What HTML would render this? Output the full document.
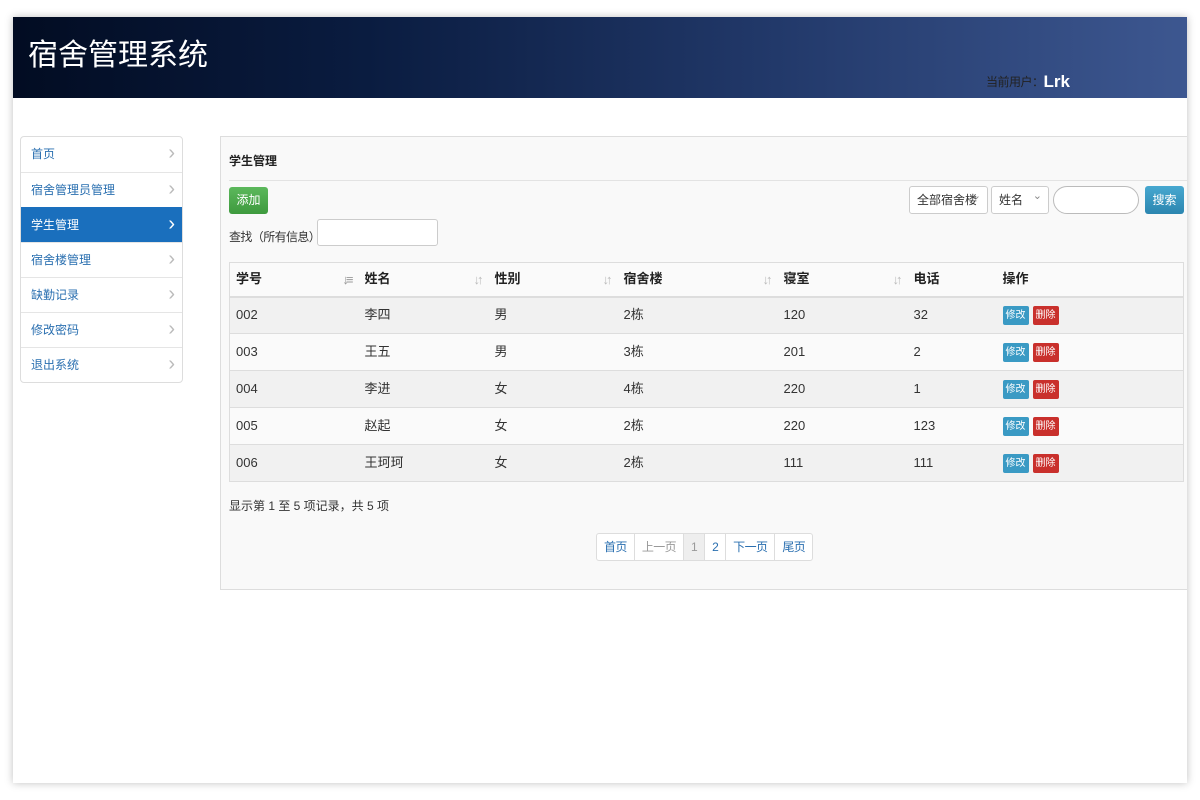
<!DOCTYPE html><html><head><meta charset="utf-8"><style>
*{box-sizing:border-box;margin:0;padding:0}
body{width:1200px;height:800px;background:#fff;font-family:"Liberation Sans","Noto Sans CJK SC",sans-serif;font-size:12px;color:#333;position:relative;overflow:hidden}
.page{position:absolute;left:13px;top:17px;width:1174px;height:766px;background:#fff;box-shadow:0 0 8px rgba(0,0,0,.25);overflow:hidden}
.hdr{position:absolute;left:0;top:0;width:1174px;height:81px;background:linear-gradient(90deg,#020c22 0%,#0a1c40 30%,#22396a 65%,#3d5790 100%)}
.hdr h1{position:absolute;left:15px;top:13px;color:#fff;font-size:30px;line-height:44px;font-weight:normal;font-family:"Noto Sans CJK SC",sans-serif}
.user{position:absolute;left:973px;top:56px;color:#222;font-size:12px;line-height:16px;letter-spacing:-0.5px}
.user b{color:#fff;font-size:17px;margin-left:0;position:relative;top:1px;letter-spacing:0}
.side{position:absolute;left:7px;top:119px;width:163px;border:1px solid #ddd;border-radius:4px;background:#fff;overflow:hidden}
.side div{height:35px;line-height:34px;padding-left:10px;color:#2a6fb0;border-top:1px solid #e5e5e5;position:relative;font-size:12px}
.side div:first-child{border-top:none}
.side div:after{content:"›";position:absolute;right:7px;top:-1px;color:#bbb;font-size:20px}
.side div.on{background:#1a6fbd;color:#fff;border-color:#1a6fbd}
.side div.on:after{color:#fff}
.main{position:absolute;left:207px;top:119px;width:980px;height:454px;background:#f9f9f9;border:1px solid #ddd}
.ttl{position:absolute;left:8px;top:15px;font-size:12px;font-weight:bold;color:#222}
.hr{position:absolute;left:8px;right:4px;top:43px;border-top:1px solid #e3e3e3}
.add{position:absolute;left:8px;top:50px;width:39px;height:27px;background:linear-gradient(#5cb85c,#3e9a3e);border-radius:3px;color:#fff;text-align:center;line-height:27px;font-size:12px}
.find{position:absolute;left:8px;top:91px;letter-spacing:-0.6px}
.inp{position:absolute;left:96px;top:82px;width:121px;height:27px;border:1px solid #ccc;border-radius:3px;background:#fff}
.sel{position:absolute;top:49px;height:28px;border:1px solid #ccc;border-radius:3px;background:#fff;line-height:26px;padding-left:7px;font-size:12px}
.sel:after{content:"⌄";position:absolute;right:6px;top:-4px;color:#888;font-size:11px}
.srch{position:absolute;left:832px;top:49px;width:86px;height:28px;border:1px solid #bbb;border-radius:14px;background:#fff}
.sbtn{position:absolute;left:924px;top:49px;width:39px;height:28px;background:linear-gradient(#47a8d0,#2c86b0);border-radius:3px;color:#fff;text-align:center;line-height:28px}
table{position:absolute;left:8px;top:125px;width:955px;border-collapse:collapse;border:1px solid #ddd;background:#fafafa}
th{height:34px;text-align:left;padding-left:6px;font-size:13px;font-weight:bold;color:#222;border-bottom:2px solid #ddd;position:relative;background:#fafafa;line-height:16px}
th i{position:absolute;right:8px;top:9px;color:#bbb;font-style:normal;font-size:13px;letter-spacing:-3px}
td{height:37px;padding-left:6px;border-top:1px solid #ddd;font-size:13px;color:#333;line-height:16px;vertical-align:middle}
tr.g td{background:#f1f1f1}
.b{display:inline-block;width:26px;height:19px;line-height:19px;text-align:center;color:#fff;font-size:10px;border-radius:2px;margin-right:4px;vertical-align:middle}
.e{background:#3a9ac4}.d{background:#c9302c}
.info{position:absolute;left:8px;top:360px}
.pg{position:absolute;left:375px;top:396px;height:28px;border:1px solid #ddd;border-radius:3px;display:flex;background:#fff}
.pg span{padding:0 7px;line-height:26px;color:#2a6fb0;border-left:1px solid #ddd;font-size:12px;letter-spacing:-0.6px}
.pg span:first-child{border-left:none}
.pg .dis{color:#999}.pg .act{background:#eee;color:#999}
</style></head><body><div class="page">
<div class="hdr"><h1>宿舍管理系统</h1><div class="user">当前用户：<b>Lrk</b></div></div>
<div class="side"><div>首页</div><div>宿舍管理员管理</div><div class="on">学生管理</div><div>宿舍楼管理</div><div>缺勤记录</div><div>修改密码</div><div>退出系统</div></div>
<div class="main">
<div class="ttl">学生管理</div><div class="hr"></div>
<div class="add">添加</div>
<div class="find">查找（所有信息）:</div><div class="inp"></div>
<div class="sel" style="left:688px;width:79px">全部宿舍楼</div>
<div class="sel" style="left:770px;width:58px">姓名</div>
<div class="srch"></div><div class="sbtn">搜索</div>
<table>
<tr><th style="width:129px">学号<i style="color:#999">↓≡</i></th><th style="width:130px">姓名<i>↓↑</i></th><th style="width:129px">性别<i>↓↑</i></th><th style="width:160px">宿舍楼<i>↓↑</i></th><th style="width:130px">寝室<i>↓↑</i></th><th style="width:89px">电话</th><th>操作</th></tr>
<tr class="g"><td>002</td><td>李四</td><td>男</td><td>2栋</td><td>120</td><td>32</td><td><span class="b e">修改</span><span class="b d">删除</span></td></tr>
<tr><td>003</td><td>王五</td><td>男</td><td>3栋</td><td>201</td><td>2</td><td><span class="b e">修改</span><span class="b d">删除</span></td></tr>
<tr class="g"><td>004</td><td>李进</td><td>女</td><td>4栋</td><td>220</td><td>1</td><td><span class="b e">修改</span><span class="b d">删除</span></td></tr>
<tr><td>005</td><td>赵起</td><td>女</td><td>2栋</td><td>220</td><td>123</td><td><span class="b e">修改</span><span class="b d">删除</span></td></tr>
<tr class="g"><td>006</td><td>王珂珂</td><td>女</td><td>2栋</td><td>111</td><td>111</td><td><span class="b e">修改</span><span class="b d">删除</span></td></tr>
</table>
<div class="info">显示第 1 至 5 项记录，共 5 项</div>
<div class="pg"><span>首页</span><span class="dis">上一页</span><span class="act">1</span><span>2</span><span>下一页</span><span>尾页</span></div>
</div></div></body></html>
